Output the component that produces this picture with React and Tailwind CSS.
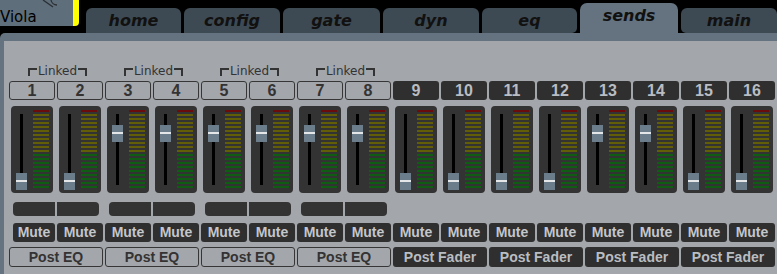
const TABS = [
  { name: "home", w: "w-[95px]" },
  { name: "config", w: "w-[96px]" },
  { name: "gate", w: "w-[97px]" },
  { name: "dyn", w: "w-[96px]" },
  { name: "eq", w: "w-[95px]", corner: "rounded-br-[5px]" },
  { name: "sends", w: "w-[98px]", active: true },
  { name: "main", w: "w-[96px]", corner: "rounded-bl-[5px]" },
];

const HIGH = [3, 4, 5, 6, 7, 8, 13, 14];

const segColor = (i) => {
  if (i === 0) return "bg-[#6a0c0c]";
  if (i <= 10) return "bg-[#625d07]";
  return "bg-[#0f5d12]";
};

const Fader = ({ ch }) => {
  const high = HIGH.includes(ch);
  return (
    <div className="flex w-[42px] h-[87px] ml-[2px] mr-[4px] rounded-[4px] bg-[#333333] pl-[5px] pt-[4px]">
      <div className="relative w-[11px] h-full">
        <div className="absolute left-[4px] top-[4px] w-[3px] h-[71px] bg-black" />
        <div
          className={
            "absolute left-0 w-[11px] h-[17px] bg-[#6b7c8b] " +
            (high ? "top-[15px]" : "top-[63px]")
          }
        >
          <div className="mt-[7px] h-[2px] bg-[#e4e6e8]" />
        </div>
      </div>
      <div className="ml-[6px] flex flex-col gap-[2px]">
        {Array.from({ length: 20 }).map((_, i) => (
          <div key={i} className={"w-[16px] h-[2px] " + segColor(i)} />
        ))}
      </div>
    </div>
  );
};

const Bracket = ({ side }) => (
  <div
    className={
      "mt-[4px] w-[9px] h-[8px] border-t-2 border-[#333333] " +
      (side === "left" ? "border-l-2" : "border-r-2")
    }
  />
);

const Pair = ({ index }) => {
  const linked = index < 4;
  const a = index * 2 + 1;
  const b = a + 1;
  const numBox = linked
    ? "border border-[#363636] text-[#333333]"
    : "bg-[#2f2f2f] text-[#b9bdc1]";

  return (
    <div className="flex flex-col w-[96px]">
      <div className="h-[14px] flex justify-center items-start pl-[1px]">
        {linked && (
          <>
            <Bracket side="left" />
            <span className="text-[12px] leading-[14px] text-[#333333] px-[1px]">Linked</span>
            <Bracket side="right" />
          </>
        )}
      </div>

      <div className="mt-[3px] flex font-['Liberation_Sans',Arial,sans-serif]">
        {[a, b].map((n) => (
          <div
            key={n}
            className={
              "w-[46px] h-[19px] mr-[2px] rounded-[3px] flex items-center justify-center text-[16px] font-bold leading-[19px] " +
              numBox
            }
          >
            {n}
          </div>
        ))}
      </div>

      <div className="mt-[6px] flex">
        <Fader ch={a} />
        <Fader ch={b} />
      </div>

      <div className="mt-[9px] h-[14px] flex pl-[4px] gap-[2px]">
        {linked && (
          <>
            <div className="w-[42px] h-full rounded-l-[4px] bg-[#333333]" />
            <div className="w-[42px] h-full rounded-r-[4px] bg-[#333333]" />
          </>
        )}
      </div>

      <div className="mt-[7px] flex font-['Liberation_Sans',Arial,sans-serif]">
        {[a, b].map((n) => (
          <div
            key={n}
            className={
              "h-[19px] mr-[2px] rounded-[3px] bg-[#2f2f2f] text-[#c3c6ca] text-[14px] font-bold leading-[19px] flex items-center justify-center " +
              (n === 1 ? "ml-[4px] w-[42px]" : "w-[46px]")
            }
          >
            Mute
          </div>
        ))}
      </div>

      <div
        className={
          "mt-[5px] w-[94px] h-[20px] rounded-[3px] text-[14px] font-bold leading-[20px] flex items-center justify-center font-['Liberation_Sans',Arial,sans-serif] " +
          (linked ? "border border-[#363636] text-[#333333]" : "bg-[#2f2f2f] text-[#b9bdc1]")
        }
      >
        {linked ? "Post EQ" : "Post Fader"}
      </div>
    </div>
  );
};

export default function App() {
  return (
    <div className="w-[777px] h-[274px] bg-black overflow-hidden font-['DejaVu_Sans',sans-serif]">
      <div className="h-[33px] flex items-start">
        <div className="relative w-[80px] h-[26px] bg-[#5f6e7b] text-black text-[15px] leading-[18px] pt-[8px]">
          <svg className="absolute left-[40px] top-0" width="20" height="10" viewBox="0 0 20 10">
            <path d="M3 0 L13 7" stroke="#2a2f33" strokeWidth="1.3" fill="none" />
            <path d="M11 0 A6 6 0 0 0 17 5" stroke="#2a2f33" strokeWidth="1.3" fill="none" />
          </svg>
          Viola
        </div>
        <div className="w-[6px] h-[26px] bg-[#ffff00] rounded-br-[4px]" />
        <div className="ml-[7px] flex gap-[3px] items-end h-[33px]">
          {TABS.map((t) =>
            t.active ? (
              <div
                key={t.name}
                className={
                  t.w +
                  " h-[30px] rounded-t-[7px] bg-[#64737f] flex justify-center pt-[3px] text-[16px] leading-[19px] font-bold italic text-[#111111]"
                }
              >
                {t.name}
              </div>
            ) : (
              <div
                key={t.name}
                className={
                  t.w +
                  " h-[25px] rounded-t-[6px] bg-[#3e4a53] flex items-center justify-center text-[16px] leading-[19px] font-bold italic text-[#111111] " +
                  (t.corner || "")
                }
              >
                {t.name}
              </div>
            )
          )}
        </div>
      </div>

      <div className="h-[241px] bg-[#64737f] rounded-tl-[5px] pl-[4px] pt-[8px]">
        <div className="h-full bg-[#a3a6ab] pl-[5px] pt-[23px] flex">
          {Array.from({ length: 8 }).map((_, i) => (
            <Pair key={i} index={i} />
          ))}
        </div>
      </div>
    </div>
  );
}
